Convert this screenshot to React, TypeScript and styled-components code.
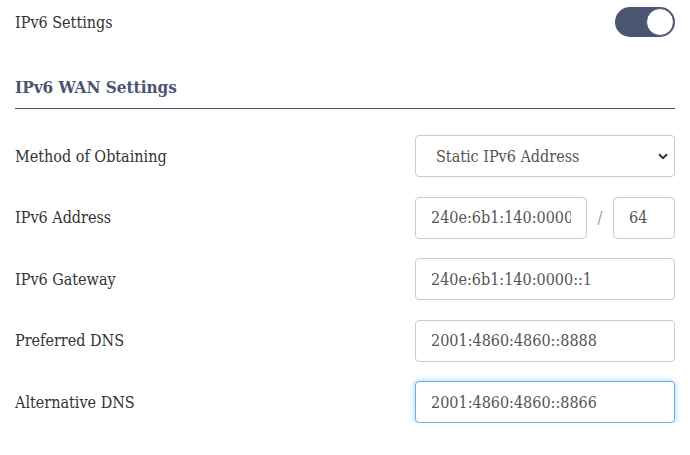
import styled, { createGlobalStyle } from "styled-components";

/* ---------------------------------------------
   Global
--------------------------------------------- */
const serif = `"DejaVu Serif Condensed", "DejaVu Serif", "Liberation Serif", "Times New Roman", serif`;

const GlobalStyle = createGlobalStyle`
  html, body {
    margin: 0;
    background: #ffffff;
    font-family: ${serif};
    color: #333333;
  }
  * {
    box-sizing: border-box;
  }
`;

/* ---------------------------------------------
   Styled Components
--------------------------------------------- */
const Page = styled.div`
  width: 690px;
  padding: 0 15px;
  font-family: ${serif};
  font-stretch: condensed;
`;

const TopRow = styled.div`
  height: 44px;
  display: flex;
  align-items: center;
  justify-content: space-between;
  font-size: 16px;
`;

const Toggle = styled.button<{ $on: boolean }>`
  width: 60px;
  height: 30px;
  border: none;
  padding: 1px;
  border-radius: 15px;
  background: ${(p) => (p.$on ? "#4a5570" : "#cfd4dc")};
  display: flex;
  justify-content: ${(p) => (p.$on ? "flex-end" : "flex-start")};
  align-items: center;
  cursor: pointer;
`;

const Knob = styled.span`
  width: 28px;
  height: 28px;
  border-radius: 50%;
  background: #ffffff;
  border: 1px solid #4a5570;
`;

const SectionTitle = styled.h2`
  margin: 31px 0 0;
  padding-bottom: 9px;
  font-family: ${serif};
  font-stretch: condensed;
  font-size: 17px;
  line-height: 24px;
  font-weight: 700;
  color: #4a5570;
  border-bottom: 1px solid #4a5570;
`;

const Form = styled.div`
  margin-top: 26px;
  display: flex;
  flex-direction: column;
  gap: 19.5px;
`;

const Row = styled.div`
  display: grid;
  grid-template-columns: 1fr 260px;
  align-items: center;
  height: 42px;
`;

const Label = styled.span`
  font-family: ${serif};
  font-stretch: condensed;
  font-size: 16px;
  color: #333333;
`;

const Field = styled.input<{ $focused?: boolean }>`
  width: 100%;
  height: 42px;
  padding: 0 15px;
  font-family: ${serif};
  font-stretch: condensed;
  font-size: 16px;
  color: #555555;
  background: #ffffff;
  border: 1px solid ${(p) => (p.$focused ? "#66afe9" : "#cccccc")};
  border-radius: 4px;
  outline: none;
  box-shadow: ${(p) =>
    p.$focused ? "0 0 6px rgba(102, 175, 233, 0.6)" : "none"};
`;

const SplitField = styled.div`
  display: grid;
  grid-template-columns: 172px 26px 1fr;
  align-items: center;
`;

const Slash = styled.span`
  text-align: center;
  font-family: ${serif};
  font-size: 16px;
  color: #999999;
`;

const SelectWrap = styled.div`
  position: relative;
  height: 42px;
`;

const Select = styled.select`
  appearance: none;
  width: 100%;
  height: 42px;
  padding: 0 36px 0 20px;
  font-family: ${serif};
  font-stretch: condensed;
  font-size: 16px;
  color: #555555;
  background: #ffffff;
  border: 1px solid #cccccc;
  border-radius: 4px;
  outline: none;
`;

const Chevron = styled.svg`
  position: absolute;
  right: 7px;
  top: 18px;
  pointer-events: none;
`;

/* ---------------------------------------------
   Component
--------------------------------------------- */
export default function App() {
  return (
    <Page>
      <GlobalStyle />
      <TopRow>
        <span>IPv6 Settings</span>
        <Toggle $on aria-label="IPv6 Settings">
          <Knob />
        </Toggle>
      </TopRow>

      <SectionTitle>IPv6 WAN Settings</SectionTitle>

      <Form>
        <Row>
          <Label>Method of Obtaining</Label>
          <SelectWrap>
            <Select defaultValue="static">
              <option value="static">Static IPv6 Address</option>
              <option value="dhcp">DHCPv6</option>
              <option value="slaac">SLAAC</option>
            </Select>
            <Chevron width="10" height="7" viewBox="0 0 10 7">
              <path
                d="M1 1.2 L5 5.2 L9 1.2"
                fill="none"
                stroke="#333"
                strokeWidth="2"
              />
            </Chevron>
          </SelectWrap>
        </Row>

        <Row>
          <Label>IPv6 Address</Label>
          <SplitField>
            <Field readOnly defaultValue="240e:6b1:140:0000::10" />
            <Slash>/</Slash>
            <Field readOnly defaultValue="64" />
          </SplitField>
        </Row>

        <Row>
          <Label>IPv6 Gateway</Label>
          <Field readOnly defaultValue="240e:6b1:140:0000::1" />
        </Row>

        <Row>
          <Label>Preferred DNS</Label>
          <Field readOnly defaultValue="2001:4860:4860::8888" />
        </Row>

        <Row>
          <Label>Alternative DNS</Label>
          <Field $focused readOnly defaultValue="2001:4860:4860::8866" />
        </Row>
      </Form>
    </Page>
  );
}
